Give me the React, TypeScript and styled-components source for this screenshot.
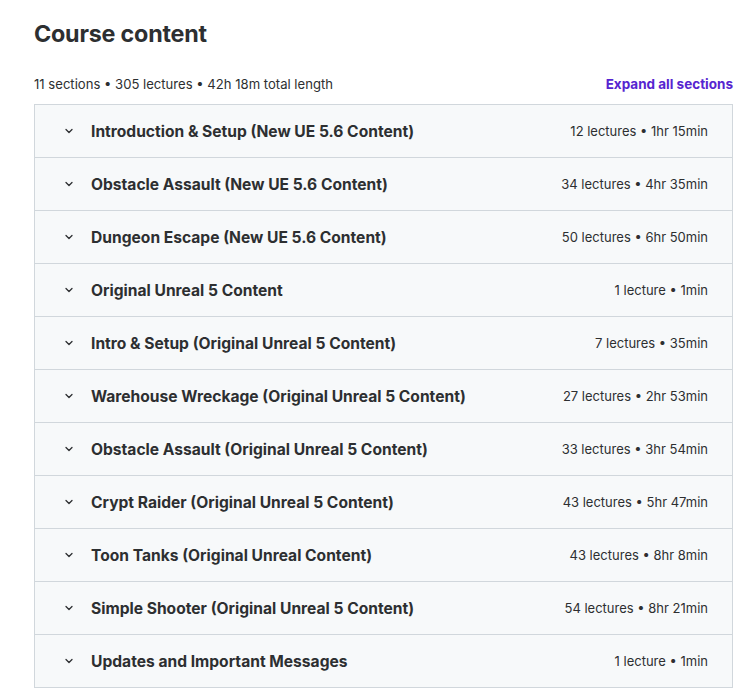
import React from "react";
import styled, { createGlobalStyle } from "styled-components";

const Global = createGlobalStyle`
  html, body { margin: 0; padding: 0; background: #fff; }
  body { font-family: Inter, "Liberation Sans", Arial, sans-serif; color: #2d2f31; }
`;

const Page = styled.div`
  padding: 18px 22px 0 34px;
  width: 755px;
  box-sizing: border-box;
`;

const Title = styled.h2`
  margin: 0;
  font-size: 23.3px;
  font-weight: 700;
  letter-spacing: -0.2px;
  line-height: 32px;
  color: #2d2f31;
`;

const Meta = styled.div`
  display: flex;
  justify-content: space-between;
  align-items: center;
  margin-top: 26px;
  margin-bottom: 12px;
`;

const Summary = styled.span`
  font-size: 13.1px;
  color: #2d2f31;
`;

const Expand = styled.button`
  border: none;
  background: none;
  padding: 0;
  font-family: inherit;
  font-size: 13.5px;
  font-weight: 700;
  color: #5624d0;
  cursor: pointer;
`;

const Panel = styled.div`
  border: 1px solid #d1d7dc;
  border-bottom: none;
`;

const Row = styled.div`
  display: flex;
  align-items: center;
  height: 52px;
  padding: 0 24px 0 27px;
  background: #f7f9fa;
  border-bottom: 1px solid #d1d7dc;
`;

const Chevron = styled.span`
  display: flex;
  width: 14px;
  margin-right: 15px;
  color: #2d2f31;
`;

const SectionTitle = styled.span`
  flex: 1;
  font-size: 15.6px;
  font-weight: 700;
  color: #2d2f31;
`;

const SectionMeta = styled.span`
  font-size: 13px;
  color: #2d2f31;
`;

const sections: [string, string][] = [
  ["Introduction & Setup (New UE 5.6 Content)", "12 lectures • 1hr 15min"],
  ["Obstacle Assault (New UE 5.6 Content)", "34 lectures • 4hr 35min"],
  ["Dungeon Escape (New UE 5.6 Content)", "50 lectures • 6hr 50min"],
  ["Original Unreal 5 Content", "1 lecture • 1min"],
  ["Intro & Setup (Original Unreal 5 Content)", "7 lectures • 35min"],
  ["Warehouse Wreckage (Original Unreal 5 Content)", "27 lectures • 2hr 53min"],
  ["Obstacle Assault (Original Unreal 5 Content)", "33 lectures • 3hr 54min"],
  ["Crypt Raider (Original Unreal 5 Content)", "43 lectures • 5hr 47min"],
  ["Toon Tanks (Original Unreal Content)", "43 lectures • 8hr 8min"],
  ["Simple Shooter (Original Unreal 5 Content)", "54 lectures • 8hr 21min"],
  ["Updates and Important Messages", "1 lecture • 1min"],
];

const ChevronIcon = () => (
  <svg width="14" height="14" viewBox="0 0 14 14" fill="none">
    <path d="M4 5.5 L7 8.5 L10 5.5" stroke="currentColor" strokeWidth="1.3" strokeLinecap="round" strokeLinejoin="round" />
  </svg>
);

export default function App() {
  return (
    <>
      <Global />
      <Page>
        <Title>Course content</Title>
        <Meta>
          <Summary>11 sections • 305 lectures • 42h 18m total length</Summary>
          <Expand>Expand all sections</Expand>
        </Meta>
        <Panel>
          {sections.map(([t, m]) => (
            <Row key={t}>
              <Chevron>
                <ChevronIcon />
              </Chevron>
              <SectionTitle>{t}</SectionTitle>
              <SectionMeta>{m}</SectionMeta>
            </Row>
          ))}
        </Panel>
      </Page>
    </>
  );
}
